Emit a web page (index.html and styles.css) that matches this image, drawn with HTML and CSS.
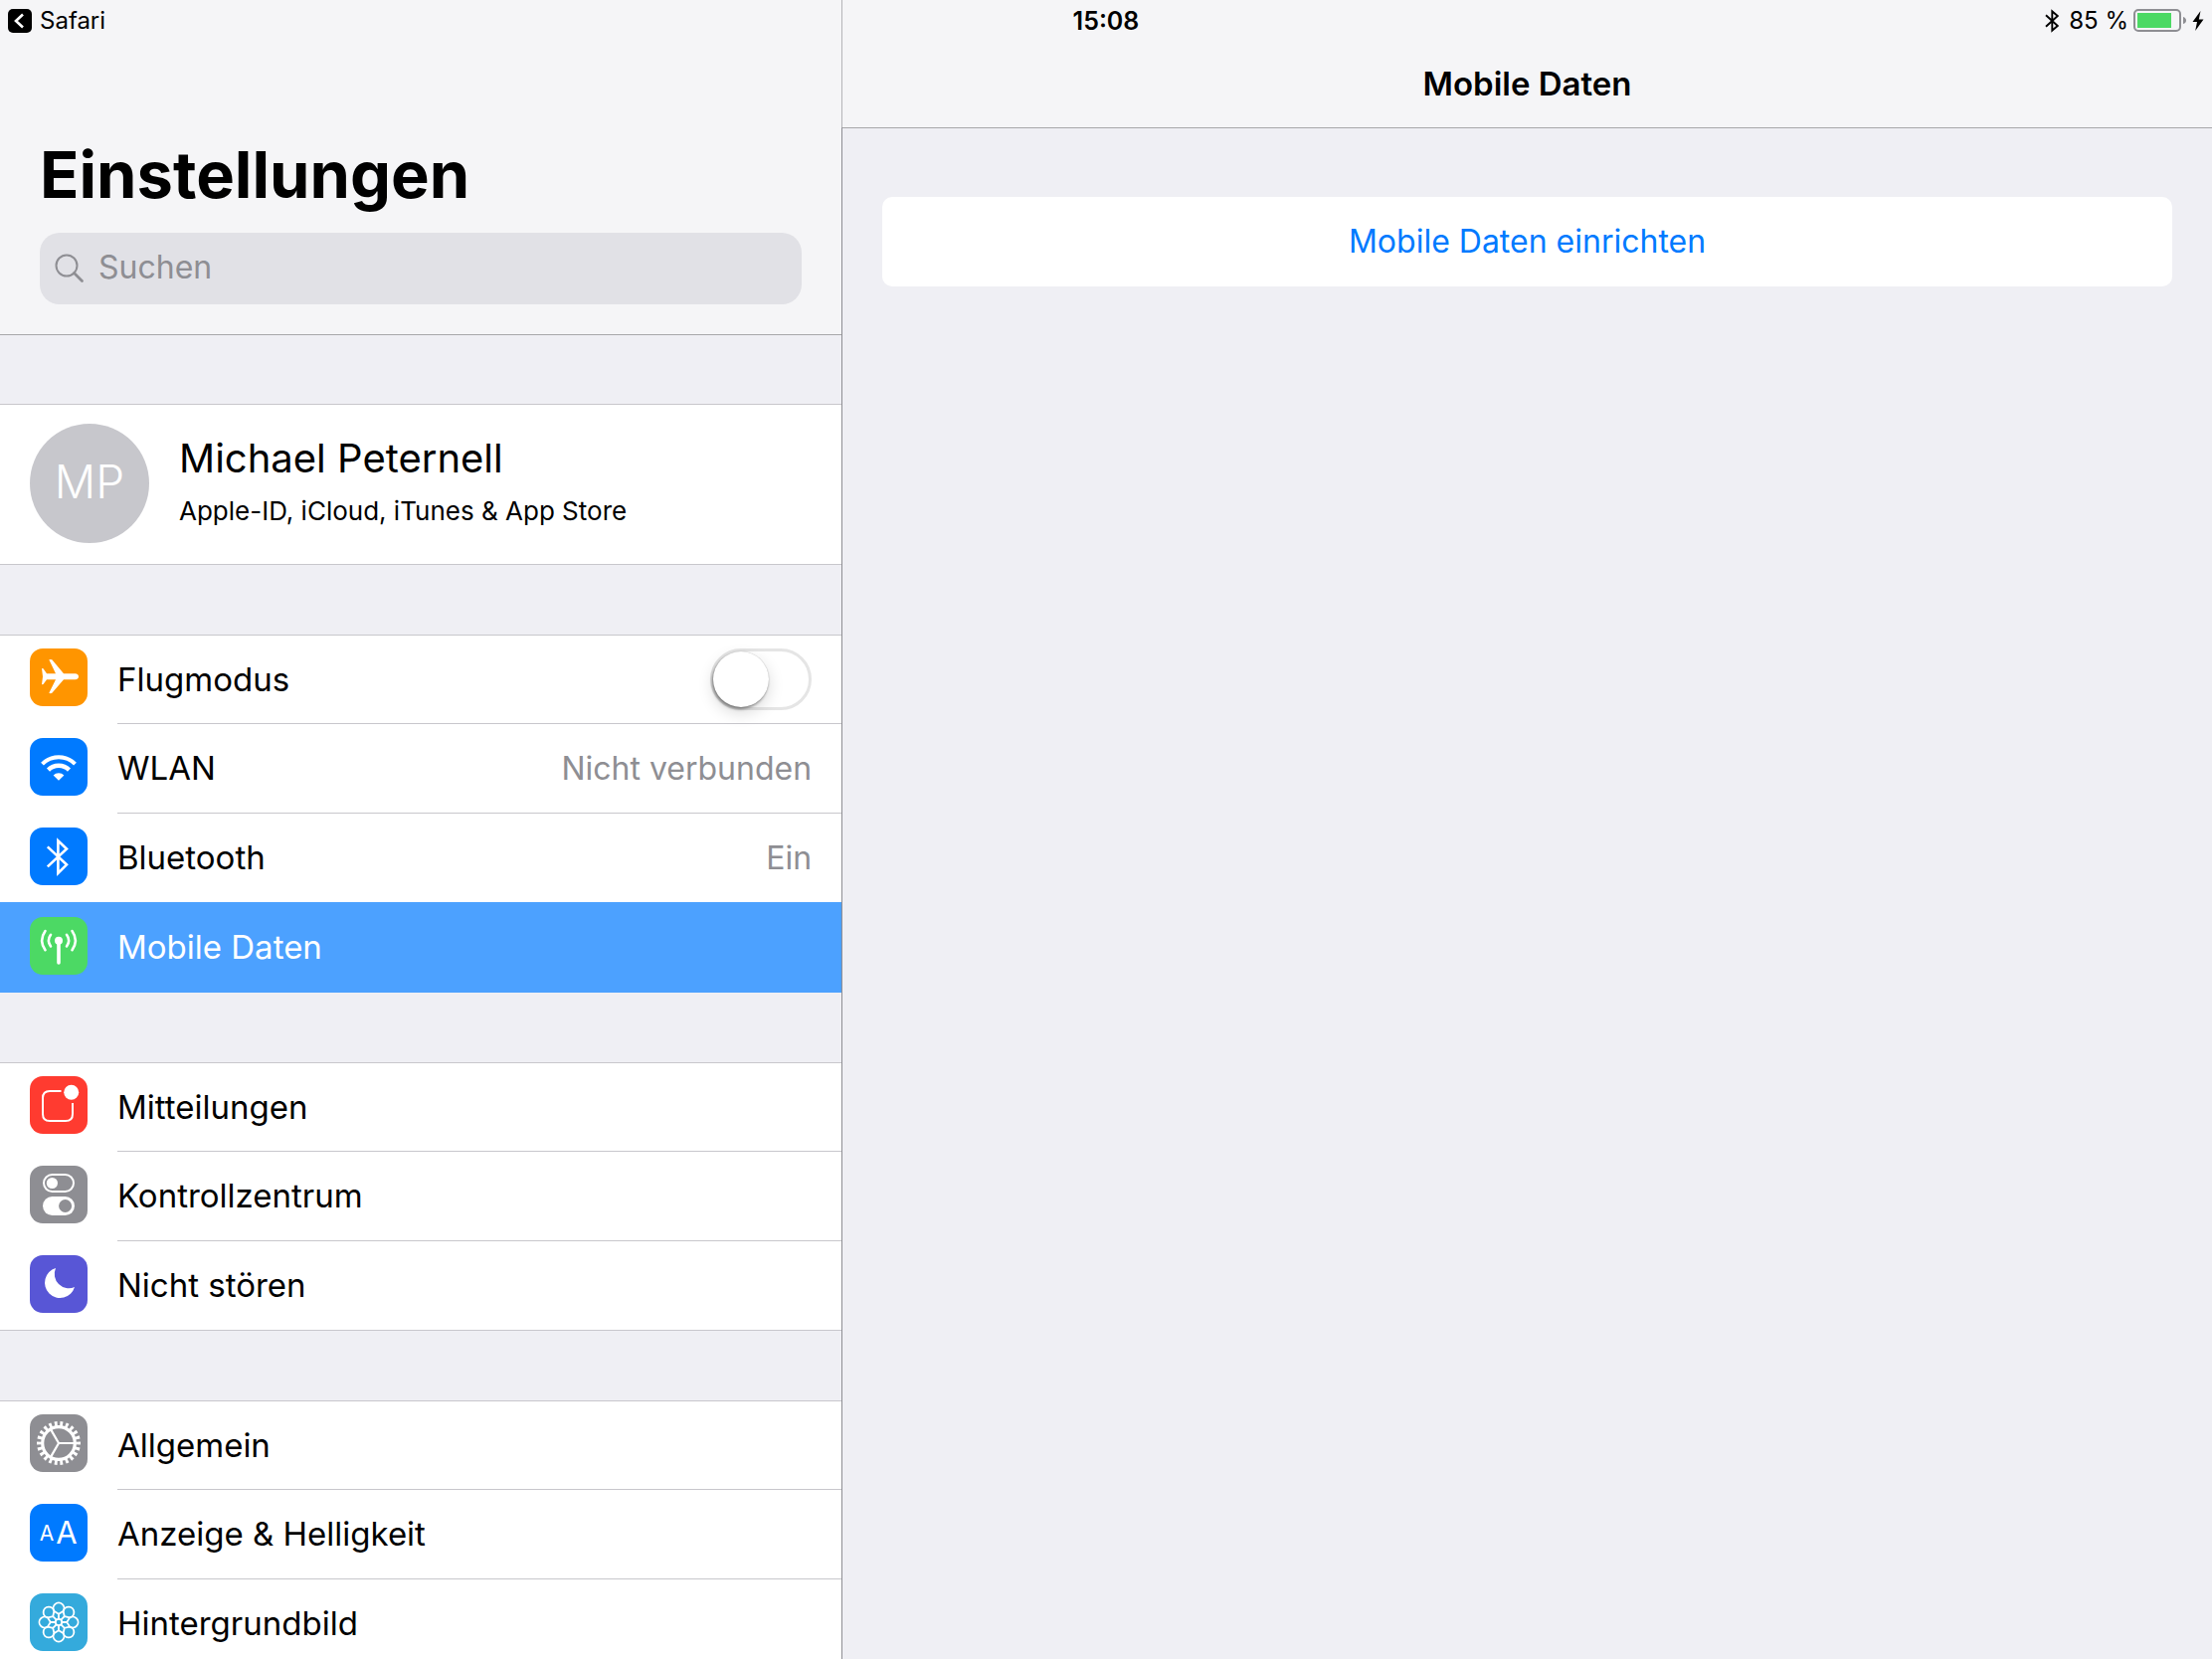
FILE: index.html
```html
<!DOCTYPE html>
<html lang="de">
<head>
    <meta charset="UTF-8">
    <meta name="viewport" content="width=device-width, initial-scale=1.0">
    <title>Einstellungen</title>
    <link rel="stylesheet" href="styles.css">
</head>
<body>

    <div class="status-bar">
        <a class="back-link" href="#">
            <svg width="24" height="24" viewBox="0 0 24 24" aria-hidden="true">
                <rect width="24" height="24" rx="5" fill="#000"/>
                <path d="M15 5.5 L8 12 L15 18.5" fill="none" stroke="#fff" stroke-width="2.6"/>
            </svg>
            <span>Safari</span>
        </a>
        <span class="time">15:08</span>
        <div class="indicators">
            <svg class="bluetooth" width="15" height="24" viewBox="0 0 15 24" aria-hidden="true">
                <path d="M1 6.3 L12.8 17 L7.3 21.6 V2.4 L12.8 7 L1 17.7" fill="none" stroke="#000" stroke-width="1.9"/>
            </svg>
            <span>85 %</span>
            <svg class="battery" width="54" height="24" viewBox="0 0 54 24" aria-hidden="true">
                <rect x="1" y="1" width="46" height="21" rx="4" fill="none" stroke="#8e8e93" stroke-width="2"/>
                <rect x="4" y="4" width="34" height="15" fill="#4cd964"/>
                <path d="M50 8 Q53 9 53 11.5 Q53 14 50 15 Z" fill="#8e8e93"/>
            </svg>
            <svg width="12" height="20" viewBox="0 0 12 20" aria-hidden="true">
                <path d="M8.5 0 L0.5 11 H5 L3.2 20 L11.5 8.6 H6.8 Z" fill="#000"/>
            </svg>
        </div>
    </div>

    <div class="split">
        <aside class="sidebar">
            <header class="sidebar-header">
                <h1>Einstellungen</h1>
                <div class="search">
                    <svg width="30" height="30" viewBox="0 0 30 30" aria-hidden="true">
                        <circle cx="12" cy="12" r="10.5" fill="none" stroke="#8e8e93" stroke-width="2"/>
                        <path d="M19.5 19.5 L27.5 27.5" stroke="#8e8e93" stroke-width="2.8" stroke-linecap="round"/>
                    </svg>
                    <input type="search" placeholder="Suchen" aria-label="Suchen">
                </div>
            </header>

            <nav class="groups">
                <a class="profile" href="#">
                    <span class="avatar">MP</span>
                    <span class="profile-text">
                        <span class="profile-name">Michael Peternell</span>
                        <span class="profile-info">Apple-ID, iCloud, iTunes &amp; App Store</span>
                    </span>
                </a>

                <ul class="group">
                    <li class="row">
                        <svg class="icon orange" viewBox="0 0 58 58" aria-hidden="true">
                            <path fill="#fff" d="M12 20 L13.5 20.3 L17 25.2 H26 L19.3 11.3 Q20.8 10.6 22.3 11.3 L34 25.2 H45.5 Q49 25.6 49 28.2 Q49 30.8 45.5 31.2 H34 L22.3 44.8 Q20.8 45.6 19.3 44.8 L26 31.2 H17 L13.5 36 L12 36.2 L13 28.2 Z"/>
                        </svg>
                        <div class="row-body">
                            <label class="row-label" for="flight">Flugmodus</label>
                            <input class="switch" type="checkbox" id="flight">
                        </div>
                    </li>
                    <li class="row">
                        <svg class="icon blue" viewBox="0 0 58 58" aria-hidden="true">
                            <g fill="none" stroke="#fff">
                                <path stroke-width="4" d="M12.5 26.1 A23.4 23.4 0 0 1 45.5 26.1"/>
                                <path stroke-width="4.4" d="M18.5 32.1 A14.8 14.8 0 0 1 39.5 32.1"/>
                            </g>
                            <path fill="#fff" d="M29 42.8 L23.6 37.4 A7.6 7.6 0 0 1 34.4 37.4 Z"/>
                        </svg>
                        <a class="row-body" href="#">
                            <span class="row-label">WLAN</span>
                            <span class="row-value">Nicht verbunden</span>
                        </a>
                    </li>
                    <li class="row">
                        <svg class="icon blue" viewBox="0 0 58 58" aria-hidden="true">
                            <path fill="none" stroke="#fff" stroke-width="2.6" d="M17.8 19.4 L37 37.3 L28.4 45.8 V13.2 L37 21.5 L17.8 39.4"/>
                        </svg>
                        <a class="row-body" href="#">
                            <span class="row-label">Bluetooth</span>
                            <span class="row-value">Ein</span>
                        </a>
                    </li>
                    <li class="row selected">
                        <svg class="icon green" viewBox="0 0 58 58" aria-hidden="true">
                            <circle cx="29" cy="23.8" r="4" fill="#fff"/>
                            <g fill="none" stroke="#fff" stroke-width="2.6" stroke-linecap="round">
                                <path stroke-width="3.6" d="M29 24 V46"/>
                                <path d="M21 17.8 Q16.8 23.6 21 29.4"/>
                                <path d="M37 17.8 Q41.2 23.6 37 29.4"/>
                                <path d="M15.5 14 Q8.8 23.6 15.5 33.2"/>
                                <path d="M42.5 14 Q49.2 23.6 42.5 33.2"/>
                            </g>
                        </svg>
                        <a class="row-body" href="#" aria-current="page">
                            <span class="row-label">Mobile Daten</span>
                        </a>
                    </li>
                </ul>

                <ul class="group">
                    <li class="row">
                        <svg class="icon red" viewBox="0 0 58 58" aria-hidden="true">
                            <path fill="none" stroke="#fff" stroke-width="2" d="M31.5 15 H20 Q13 15 13 22 V38 Q13 45 20 45 H36 Q43 45 43 38 V27"/>
                            <circle cx="41.7" cy="16.3" r="7.5" fill="#fff"/>
                        </svg>
                        <a class="row-body" href="#"><span class="row-label">Mitteilungen</span></a>
                    </li>
                    <li class="row">
                        <svg class="icon gray" viewBox="0 0 58 58" aria-hidden="true">
                            <rect x="14" y="9" width="30" height="17" rx="8.5" fill="none" stroke="#fff" stroke-width="2"/>
                            <circle cx="22.4" cy="17.5" r="5.6" fill="#fff"/>
                            <rect x="13" y="31" width="32" height="19" rx="9.5" fill="#fff"/>
                            <circle cx="35.6" cy="40.5" r="6.5" fill="#8e8e93"/>
                        </svg>
                        <a class="row-body" href="#"><span class="row-label">Kontrollzentrum</span></a>
                    </li>
                    <li class="row">
                        <svg class="icon purple" viewBox="0 0 58 58" aria-hidden="true">
                            <path fill="#fff" d="M26 13 A15.3 15.3 0 1 0 45 32 A14.4 14.4 0 0 1 26 13 Z"/>
                        </svg>
                        <a class="row-body" href="#"><span class="row-label">Nicht stören</span></a>
                    </li>
                </ul>

                <ul class="group">
                    <li class="row">
                        <svg class="icon gray" viewBox="0 0 58 58" aria-hidden="true">
                            <g fill="none" stroke="#fff">
                                <circle cx="29" cy="29" r="19.5" stroke-width="5" pathLength="44" stroke-dasharray="1 1" stroke-dashoffset="0.5"/>
                                <circle cx="29" cy="29" r="16.3" stroke-width="3.2"/>
                                <path stroke-width="2.2" d="M29 29 H45 M29 29 L21 15.1 M29 29 L21 42.9"/>
                            </g>
                        </svg>
                        <a class="row-body" href="#"><span class="row-label">Allgemein</span></a>
                    </li>
                    <li class="row">
                        <svg class="icon blue" viewBox="0 0 58 58" aria-hidden="true">
                            <text class="letter-small" x="17" y="37">A</text>
                            <text class="letter-large" x="37" y="40">A</text>
                        </svg>
                        <a class="row-body" href="#"><span class="row-label">Anzeige &amp; Helligkeit</span></a>
                    </li>
                    <li class="row">
                        <svg class="icon cyan" viewBox="0 0 58 58" aria-hidden="true">
                            <defs>
                                <path id="petal" d="M29 25.8 V20.8 L24.6 18 A5.4 5.4 0 1 1 33.4 18 L29 20.8"/>
                            </defs>
                            <g fill="none" stroke="#fff" stroke-width="1.8">
                                <use href="#petal"/>
                                <use href="#petal" transform="rotate(45 29 29)"/>
                                <use href="#petal" transform="rotate(90 29 29)"/>
                                <use href="#petal" transform="rotate(135 29 29)"/>
                                <use href="#petal" transform="rotate(180 29 29)"/>
                                <use href="#petal" transform="rotate(225 29 29)"/>
                                <use href="#petal" transform="rotate(270 29 29)"/>
                                <use href="#petal" transform="rotate(315 29 29)"/>
                                <circle cx="29" cy="29" r="3.2"/>
                            </g>
                        </svg>
                        <a class="row-body" href="#"><span class="row-label">Hintergrundbild</span></a>
                    </li>
                </ul>
            </nav>
        </aside>

        <main class="detail">
            <header class="detail-header">
                <h2>Mobile Daten</h2>
            </header>
            <div class="detail-content">
                <button type="button" class="setup-button">Mobile Daten einrichten</button>
            </div>
        </main>
    </div>

</body>
</html>
```

FILE: styles.css
```css
* {
    box-sizing: border-box;
}
body {
    font-family: Inter, "Liberation Sans", sans-serif;
    font-size: 32px;
    color: #000;
    background-color: #efeff4;
    margin: 0;
    height: 100vh;
    overflow: hidden;
}
h1, h2, ul {
    margin: 0;
    padding: 0;
}
a {
    color: inherit;
    text-decoration: none;
}
svg {
    display: block;
    flex: none;
}

/* Status bar lies over both panes */
.status-bar {
    position: absolute;
    top: 0;
    left: 0;
    right: 0;
    height: 42px;
    padding: 0 8px;
    display: grid;
    grid-template-columns: 1fr auto 1fr;
    align-items: center;
    font-size: 24px;
    line-height: 24px;
}
.back-link {
    display: flex;
    align-items: center;
    gap: 8px;
}
.time {
    font-size: 25px;
    font-weight: 600;
}
.indicators {
    display: flex;
    align-items: center;
    justify-content: flex-end;
    gap: 5px;
}
.bluetooth {
    margin-right: 4px;
}

.split {
    display: grid;
    grid-template-columns: 35fr 57fr;
    height: 100%;
}

/* Sidebar */
.sidebar {
    overflow: hidden;
}
.sidebar-header {
    background-color: #f5f5f7;
    box-shadow: 0 1px #a7a7aa;
    padding: 136px 40px 30px;
}
h1 {
    font-size: 65px;
    line-height: 80px;
    font-weight: 700;
}
.search {
    display: flex;
    align-items: center;
    gap: 14px;
    height: 72px;
    margin-top: 18px;
    padding: 0 15px;
    border-radius: 20px;
    background-color: #e1e1e6;
}
.search input {
    flex: 1;
    min-width: 0;
    padding: 0 0 4px;
    border: none;
    outline: none;
    background: none;
    font: inherit;
}
.search input::placeholder {
    color: #8e8e93;
    opacity: 1;
}
.groups {
    display: flex;
    flex-direction: column;
    gap: 70px;
    padding-top: 70px;
}
.profile {
    display: flex;
    gap: 30px;
    height: 162px;
    padding: 19px 30px;
    background-color: #fff;
    border-top: 1px solid #c8c7cc;
    border-bottom: 1px solid #c8c7cc;
}
.avatar {
    width: 120px;
    height: 120px;
    border-radius: 50%;
    background-color: #c7c7cc;
    color: #fff;
    font-size: 46px;
    font-weight: 300;
    line-height: 116px;
    text-align: center;
}
.profile-text {
    display: flex;
    flex-direction: column;
    gap: 12px;
    padding-top: 10px;
}
.profile-name {
    font-size: 40px;
    line-height: 50px;
}
.profile-info {
    font-size: 26px;
    line-height: 32px;
}
.group {
    list-style: none;
    background-color: #fff;
}
.row {
    display: flex;
    gap: 30px;
    height: 90px;
    padding-left: 30px;
}
.row:first-child {
    border-top: 1px solid #c8c7cc;
}
.row:last-child {
    border-bottom: 1px solid #c8c7cc;
}
.row-body {
    flex: 1;
    display: flex;
    align-items: center;
    justify-content: space-between;
    padding-right: 30px;
    border-bottom: 1px solid #c8c7cc;
}
.row:last-child .row-body {
    border-bottom: none;
}
.row-label, .row-value {
    padding-bottom: 1px;
}
.row-label {
    font-size: 33px;
}
.row-value {
    color: #8e8e93;
}
/* The highlight covers the separator of the row above */
.row.selected {
    position: relative;
    height: 91px;
    margin-top: -1px;
    border-bottom: none;
    background-color: #4ca1ff;
    color: #fff;
}
.icon {
    width: 58px;
    height: 58px;
    margin-top: 14px;
    border-radius: 13px;
}
.row:first-child .icon {
    margin-top: 13px;
}
.row.selected .icon {
    margin-top: 15px;
}
.orange { background-color: #ff9500; }
.blue { background-color: #007aff; }
.green { background-color: #4cd964; }
.red { background-color: #ff3b30; }
.gray { background-color: #8e8e93; }
.purple { background-color: #5856d6; }
.cyan { background-color: #34aadc; }
.letter-small, .letter-large {
    fill: #fff;
    text-anchor: middle;
}
.letter-small {
    font-size: 21px;
}
.letter-large {
    font-size: 31px;
}
.switch {
    appearance: none;
    width: 102px;
    height: 62px;
    margin: 0;
    border: 3px solid #e5e5e5;
    border-radius: 31px;
    background-color: #fff;
}
.switch::before {
    content: "";
    display: block;
    width: 56px;
    height: 56px;
    border-radius: 50%;
    background-color: #fff;
    box-shadow: 0 0 1px rgba(0, 0, 0, 0.3), -1px 2px 3px rgba(0, 0, 0, 0.4), 0 6px 16px rgba(0, 0, 0, 0.15);
}
.switch:checked {
    border-color: #4cd964;
    background-color: #4cd964;
}
.switch:checked::before {
    margin-left: 40px;
}

/* Detail pane */
.detail {
    display: flex;
    flex-direction: column;
}
.detail-header {
    padding: 64px 0 24px;
    background-color: #f5f5f7;
    border-left: 1px solid #b5b5b8;
}
h2 {
    font-size: 33px;
    line-height: 40px;
    font-weight: 600;
    text-align: center;
}
.detail-content {
    flex: 1;
    padding: 69px 40px;
    border-top: 1px solid #a7a7aa;
    border-left: 1px solid #8e8e93;
}
.setup-button {
    width: 100%;
    height: 90px;
    padding: 0 0 2px;
    border: none;
    border-radius: 10px;
    background-color: #fff;
    color: #007aff;
    font: inherit;
    cursor: pointer;
}
```
